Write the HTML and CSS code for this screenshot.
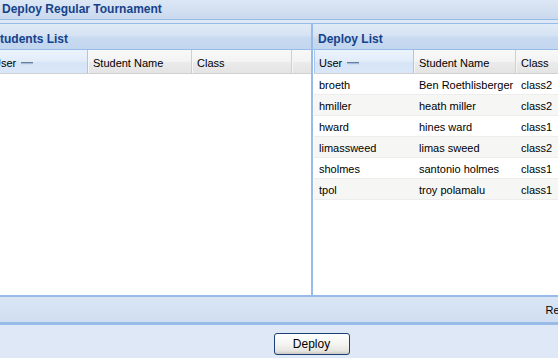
FILE: index.html
```html
<!DOCTYPE html>
<html lang="en">
<head>
  <meta charset="UTF-8">
  <title>Deploy Regular Tournament</title>
  <link rel="stylesheet" href="styles.css">
</head>
<body>
  <div class="title-bar">Deploy Regular Tournament</div>

  <div class="frame">
    <div class="lists">
      <div class="panel panel-left">
        <div class="panel-header">Students List</div>
        <div class="grid-head">
          <div class="hd hd-user sorted">User <span class="sort-icon"></span></div>
          <div class="hd hd-name wide">Student Name</div>
          <div class="hd hd-class">Class</div>
          <div class="hd hd-fill"></div>
        </div>
        <div class="grid-body"></div>
      </div>

      <div class="panel panel-right">
        <div class="panel-header">Deploy List</div>
        <div class="grid-head">
          <div class="hd hd-user sorted">User <span class="sort-icon"></span></div>
          <div class="hd hd-name">Student Name</div>
          <div class="hd hd-class">Class</div>
        </div>
        <div class="grid-body">
          <div class="row"><span class="c-user">broeth</span><span class="c-name">Ben Roethlisberger</span><span class="c-class">class2</span></div>
          <div class="row alt"><span class="c-user">hmiller</span><span class="c-name">heath miller</span><span class="c-class">class2</span></div>
          <div class="row"><span class="c-user">hward</span><span class="c-name">hines ward</span><span class="c-class">class1</span></div>
          <div class="row alt"><span class="c-user">limassweed</span><span class="c-name">limas sweed</span><span class="c-class">class2</span></div>
          <div class="row"><span class="c-user">sholmes</span><span class="c-name">santonio holmes</span><span class="c-class">class1</span></div>
          <div class="row alt"><span class="c-user">tpol</span><span class="c-name">troy polamalu</span><span class="c-class">class1</span></div>
        </div>
      </div>
    </div>

    <div class="toolbar">
      <span class="toolbar-text">Records 1 - 6 of 6</span>
    </div>

    <div class="footer">
      <button class="btn">Deploy</button>
    </div>
  </div>
</body>
</html>
```

FILE: styles.css
```css
* {
  margin: 0;
  padding: 0;
  box-sizing: border-box;
  font-family: "Liberation Sans", Arial, sans-serif;
}

html, body {
  overflow: hidden;
}

body {
  background: #dfe8f6;
  color: #000;
  font-size: 11px;
  width: 558px;
  height: 358px;
}

.title-bar {
  height: 20px;
  padding: 2px 0 0 2px;
  color: #15428b;
  font-weight: bold;
  font-size: 12px;
  background: linear-gradient(#dce7f5, #c9d9ee);
  border-bottom: 1px solid #99bbe8;
}

.frame {
  margin-left: -12px;
  margin-top: 3px;
  width: 647px;
}

.lists {
  display: flex;
  height: 274px;
  border-top: 1px solid #99bbe8;
  border-bottom: 2px solid #99bbe8;
}

.panel {
  display: flex;
  flex-direction: column;
  background: #fff;
}

.panel-left {
  width: 325px;
  border-right: 2px solid #99bbe8;
}

.panel-right {
  flex: 1;
  padding-left: 1px;
}

.panel-header {
  height: 26px;
  padding: 8px 0 0 4px;
  color: #15428b;
  font-weight: bold;
  font-size: 12px;
  background: linear-gradient(#e1ebf7 0%, #d6e3f3 45%, #c8daf1 55%, #c2d6ef 100%);
  border-bottom: 1px solid #99bbe8;
}

.panel-right .panel-header {
  margin-left: -1px;
  padding-left: 5px;
}

.grid-head {
  display: flex;
  height: 24px;
  background: linear-gradient(#f9f9f9 0%, #f3f3f3 50%, #ebebeb 51%, #e4e4e4 100%);
  border-bottom: 1px solid #d0d0d0;
}

.hd {
  padding: 7px 0 0 5px;
  border-right: 1px solid #d0d0d0;
  box-shadow: inset 1px 0 0 #f6f6f6;
  white-space: nowrap;
}

.hd.sorted {
  background: linear-gradient(#ebf3fd 0%, #e2ecf9 50%, #d6e4f7 51%, #d9e7f9 100%);
  border-right: 1px solid #a9c6ec;
  box-shadow: inset 1px 0 0 #a9c6ec;
}

.hd-user {
  width: 100px;
}

.hd-name {
  width: 102px;
}

.hd-name.wide {
  width: 104px;
}

.hd-class {
  width: 100px;
}

.panel-right .hd-class {
  flex: 1;
  border-right: none;
}

.hd-fill {
  flex: 1;
  border-right: none;
}

.sort-icon {
  display: inline-block;
  width: 12px;
  height: 3px;
  margin-left: 2px;
  vertical-align: 2px;
  background: linear-gradient(#6e7d92 0 1px, #9fbde2 1px 2px, #d3deec 2px);
}

.grid-body {
  flex: 1;
  background: #fff;
}

.row {
  display: flex;
  height: 21px;
  padding-top: 5px;
  border-bottom: 1px solid #ededed;
  white-space: nowrap;
}

.row.alt {
  background: #f6f6f4;
}

.row span {
  padding-left: 5px;
}

.c-user {
  width: 100px;
}

.c-name {
  width: 102px;
}

.toolbar {
  display: flex;
  justify-content: flex-end;
  align-items: center;
  height: 28px;
  background: linear-gradient(#dae6f4, #cfdef1);
  border-bottom: 3px solid #99bbe8;
}

.toolbar-text {
  padding-right: 2px;
}

.footer {
  display: flex;
  justify-content: center;
  padding-top: 8px;
}

.btn {
  width: 76px;
  height: 22px;
  font-size: 12px;
  color: #000;
  border: 1px solid #1c3f74;
  border-radius: 3px;
  background: linear-gradient(#ffffff 0%, #f4f4f2 50%, #e6e5e0 85%, #c9c8c2 100%);
}
```
